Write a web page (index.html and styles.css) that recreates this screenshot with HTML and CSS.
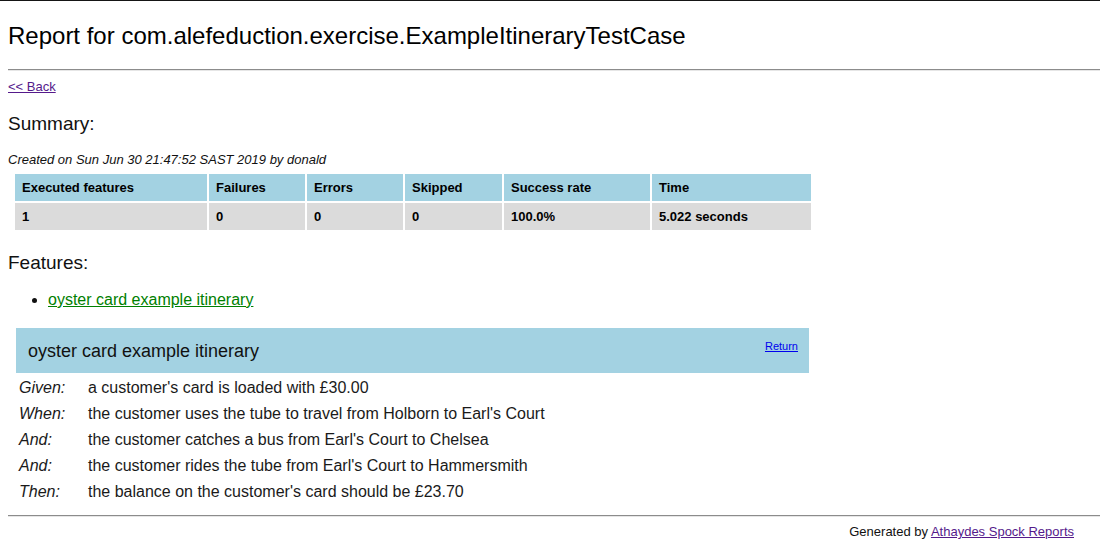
FILE: index.html
```html
<!DOCTYPE html>
<html>
<head>
<meta charset="utf-8">
<title>Report</title>
<link rel="stylesheet" href="styles.css">
</head>
<body>
<h1 class="title">Report for com.alefeduction.exercise.ExampleItineraryTestCase</h1>
<hr class="rule rule-top">
<div class="back"><a class="visited" href="#">&lt;&lt; Back</a></div>
<h2 class="section summary-title">Summary:</h2>
<div class="created">Created on Sun Jun 30 21:47:52 SAST 2019 by donald</div>
<table class="summary">
  <colgroup>
    <col class="c1"><col class="c2"><col class="c3"><col class="c4"><col class="c5"><col class="c6">
  </colgroup>
  <thead>
    <tr><th>Executed features</th><th>Failures</th><th>Errors</th><th>Skipped</th><th>Success rate</th><th>Time</th></tr>
  </thead>
  <tbody>
    <tr><td>1</td><td>0</td><td>0</td><td>0</td><td>100.0%</td><td>5.022 seconds</td></tr>
  </tbody>
</table>
<h2 class="section features-title">Features:</h2>
<ul class="feature-list">
  <li><a class="feature-link" href="#">oyster card example itinerary</a></li>
</ul>
<div class="feature-head">
  <div class="feature-name">oyster card example itinerary</div>
  <a class="return" href="#">Return</a>
</div>
<div class="steps">
  <div class="label">Given:</div><div class="text">a customer's card is loaded with £30.00</div>
  <div class="label">When:</div><div class="text">the customer uses the tube to travel from Holborn to Earl's Court</div>
  <div class="label">And:</div><div class="text">the customer catches a bus from Earl's Court to Chelsea</div>
  <div class="label">And:</div><div class="text">the customer rides the tube from Earl's Court to Hammersmith</div>
  <div class="label">Then:</div><div class="text">the balance on the customer's card should be £23.70</div>
</div>
<hr class="rule rule-bottom">
<div class="footer">Generated by <a class="visited" href="#">Athaydes Spock Reports</a></div>
</body>
</html>
```

FILE: styles.css
```css
html {
  border-top: 1px solid #151515;
  background: #fff;
}
body {
  margin: 0 0 0 8px;
  font-family: "Liberation Sans", Arial, Helvetica, sans-serif;
  color: #111;
}
.title {
  margin: 21px 0 0;
  font-size: 24px;
  line-height: 28px;
  font-weight: normal;
  color: #000;
}
.rule {
  border: 0;
  border-top: 1px solid #8c8c8c;
  border-bottom: 1px solid #e6e6e6;
  height: 0;
  margin: 0;
}
.rule-top { margin-top: 19px; }
.back {
  margin-top: 8px;
  font-size: 13px;
  line-height: 16px;
}
a.visited { color: #551a8b; }
.section {
  font-size: 19px;
  line-height: 22px;
  font-weight: normal;
  margin: 0;
  color: #111;
}
.summary-title { margin-top: 18px; }
.created {
  margin-top: 17px;
  font-size: 13px;
  line-height: 16px;
  font-style: italic;
  color: #111;
}
.summary {
  margin: 4px 0 0 5px;
  border-spacing: 2px;
  table-layout: fixed;
  width: 800px;
  font-size: 13px;
  font-weight: bold;
}
.c1 { width: 192px; }
.c2 { width: 96px; }
.c3 { width: 96px; }
.c4 { width: 97px; }
.c5 { width: 146px; }
.c6 { width: 159px; }
.summary th,
.summary td {
  height: 27px;
  padding: 0 0 0 7px;
  text-align: left;
  font-weight: bold;
  color: #000;
}
.summary th { background: #a3d2e2; }
.summary td { background: #dbdbdb; }
.features-title { margin-top: 20px; }
.feature-list {
  margin: 16px 0 0;
  padding-left: 40px;
  font-size: 16px;
  line-height: 20px;
}
.feature-link { color: #008000; }
.feature-head {
  margin: 18px 0 0 8px;
  width: 793px;
  height: 45px;
  box-sizing: border-box;
  background: #a3d2e2;
  display: flex;
  justify-content: space-between;
  align-items: flex-start;
  padding: 12px 11px 0 12px;
}
.feature-name {
  font-size: 18px;
  line-height: 22px;
  color: #111;
}
.return {
  font-size: 11px;
  line-height: 13px;
  color: #0000ee;
}
.steps {
  margin: 2px 0 0 11px;
  display: grid;
  grid-template-columns: 69px auto;
  font-size: 16px;
  line-height: 26px;
  color: #1a1a1a;
}
.label { font-style: italic; }
.rule-bottom { margin-top: 10px; }
.footer {
  margin-top: 7px;
  text-align: right;
  padding-right: 26px;
  font-size: 13px;
  line-height: 16px;
  color: #111;
}
```
